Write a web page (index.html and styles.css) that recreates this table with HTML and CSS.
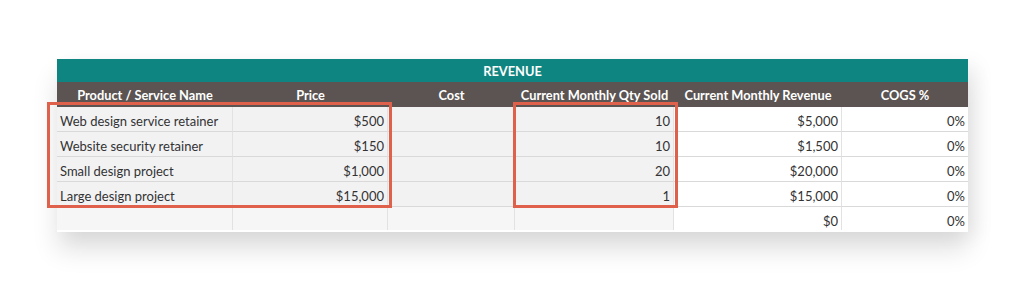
FILE: index.html
```html
<!DOCTYPE html>
<html>
<head>
<meta charset="utf-8">
<link rel="stylesheet" href="styles.css">
</head>
<body>
<div class="stage">
  <div class="sheet">
    <div class="title">REVENUE</div>
    <div class="grid">
      <div class="hd">Product / Service Name</div>
      <div class="hd">Price</div>
      <div class="hd">Cost</div>
      <div class="hd">Current Monthly Qty Sold</div>
      <div class="hd">Current Monthly Revenue</div>
      <div class="hd">COGS %</div>

      <div class="c in">Web design service retainer</div>
      <div class="c in num">$500</div>
      <div class="c in num"></div>
      <div class="c in num">10</div>
      <div class="c num">$5,000</div>
      <div class="c num">0%</div>

      <div class="c in">Website security retainer</div>
      <div class="c in num">$150</div>
      <div class="c in num"></div>
      <div class="c in num">10</div>
      <div class="c num">$1,500</div>
      <div class="c num">0%</div>

      <div class="c in">Small design project</div>
      <div class="c in num">$1,000</div>
      <div class="c in num"></div>
      <div class="c in num">20</div>
      <div class="c num">$20,000</div>
      <div class="c num">0%</div>

      <div class="c in">Large design project</div>
      <div class="c in num">$15,000</div>
      <div class="c in num"></div>
      <div class="c in num">1</div>
      <div class="c num">$15,000</div>
      <div class="c num">0%</div>

      <div class="c in last"></div>
      <div class="c in num last"></div>
      <div class="c in num last"></div>
      <div class="c in num last"></div>
      <div class="c num last">$0</div>
      <div class="c num last">0%</div>
    </div>
    <div class="mark mark-a"></div>
    <div class="mark mark-b"></div>
  </div>
</div>
</body>
</html>
```

FILE: styles.css
```css
html, body {
  margin: 0;
  padding: 0;
  background: #ffffff;
}
body {
  font-family: Lato, "Open Sans", sans-serif;
  color: #333333;
}
.stage {
  padding: 59px 0 0 57px;
  height: 294px;
  box-sizing: border-box;
}
.sheet {
  position: relative;
  width: 911px;
  background: #ffffff;
  box-shadow: 0 18px 24px rgba(0, 0, 0, 0.12), 10px 4px 18px rgba(0, 0, 0, 0.05);
}
.title {
  height: 23px;
  background: #0f8581;
  color: #ffffff;
  font-weight: 700;
  font-size: 12.8px;
  text-align: center;
  line-height: 24px;
}
.grid {
  display: grid;
  grid-template-columns: 176px 155px 127px 159px 168px 126px;
  grid-auto-rows: 25px;
}
.grid .hd {
  background: #5b5452;
  color: #ffffff;
  font-weight: 700;
  font-size: 12.8px;
  text-align: center;
  line-height: 26px;
}
.c {
  font-size: 13px;
  line-height: 28px;
  padding: 0 3px;
  border-bottom: 1px solid #d9d9d9;
  border-right: 1px solid #e2e2e2;
  white-space: nowrap;
  overflow: hidden;
  background: #ffffff;
}
.c.in {
  background: #f2f2f3;
}
.c.num {
  text-align: right;
}
.c:nth-child(6n) {
  border-right: none;
}
.c.last {
  border-bottom: none;
  height: 23px;
}
.c.in.last {
  background: #f6f6f6;
}
.mark {
  position: absolute;
  border: 3px solid #e0614b;
  box-sizing: border-box;
}
.mark-a {
  left: -10px;
  top: 43px;
  width: 345px;
  height: 106px;
}
.mark-b {
  left: 456px;
  top: 43px;
  width: 165px;
  height: 106px;
}
```
